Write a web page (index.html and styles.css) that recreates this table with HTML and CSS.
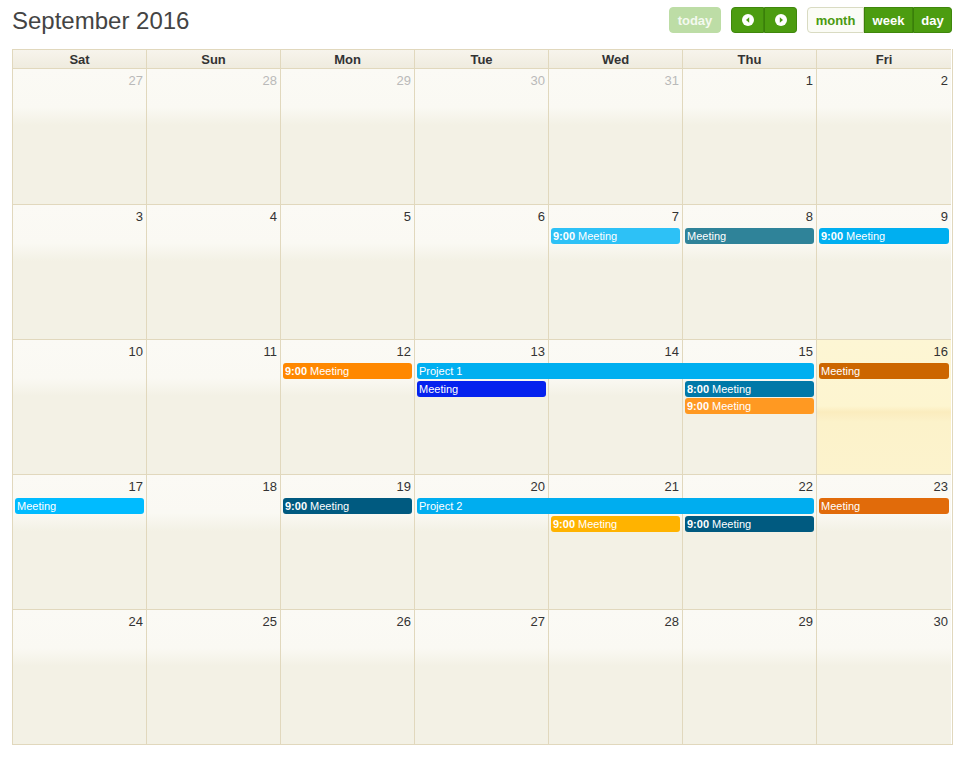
FILE: index.html
```html
<!DOCTYPE html>
<html>
<head>
<meta charset="utf-8">
<link rel="stylesheet" href="styles.css">
</head>
<body>
<div class="cal">
  <div class="toolbar">
    <h2 class="title">September 2016</h2>
    <div class="tools">
      <button class="btn today">today</button>
      <div class="group">
        <button class="btn nav"><svg width="12" height="12" viewBox="0 0 12 12"><circle cx="6" cy="6" r="6" fill="#fff"/><path d="M7.2 3.3 L4 6 L7.2 8.7 Z" fill="#4a9b0f"/></svg></button>
        <button class="btn nav"><svg width="12" height="12" viewBox="0 0 12 12"><circle cx="6" cy="6" r="6" fill="#fff"/><path d="M4.8 3.3 L8 6 L4.8 8.7 Z" fill="#4a9b0f"/></svg></button>
      </div>
      <div class="group">
        <button class="btn view active">month</button>
        <button class="btn view">week</button>
        <button class="btn view">day</button>
      </div>
    </div>
  </div>

  <div class="grid">
    <div class="head">
      <div>Sat</div><div>Sun</div><div>Mon</div><div>Tue</div><div>Wed</div><div>Thu</div><div>Fri</div>
    </div>

    <div class="week first">
      <div class="day c1 other">27</div>
      <div class="day c2 other">28</div>
      <div class="day c3 other">29</div>
      <div class="day c4 other">30</div>
      <div class="day c5 other">31</div>
      <div class="day c6">1</div>
      <div class="day c7">2</div>
    </div>

    <div class="week">
      <div class="day c1">3</div>
      <div class="day c2">4</div>
      <div class="day c3">5</div>
      <div class="day c4">6</div>
      <div class="day c5">7</div>
      <div class="day c6">8</div>
      <div class="day c7">9</div>
      <div class="ev c5 r1 e-sky"><b>9:00</b> Meeting</div>
      <div class="ev c6 r1 e-teal">Meeting</div>
      <div class="ev c7 r1 e-blue"><b>9:00</b> Meeting</div>
    </div>

    <div class="week">
      <div class="day c1">10</div>
      <div class="day c2">11</div>
      <div class="day c3">12</div>
      <div class="day c4">13</div>
      <div class="day c5">14</div>
      <div class="day c6">15</div>
      <div class="day c7 today-cell">16</div>
      <div class="ev c3 r1 e-orange"><b>9:00</b> Meeting</div>
      <div class="ev c4 s3 r1 e-blue">Project 1</div>
      <div class="ev c7 r1 e-brown">Meeting</div>
      <div class="ev c4 r2 e-royal">Meeting</div>
      <div class="ev c6 r2 e-ocean"><b>8:00</b> Meeting</div>
      <div class="ev c6 r3 e-amber"><b>9:00</b> Meeting</div>
    </div>

    <div class="week">
      <div class="day c1">17</div>
      <div class="day c2">18</div>
      <div class="day c3">19</div>
      <div class="day c4">20</div>
      <div class="day c5">21</div>
      <div class="day c6">22</div>
      <div class="day c7">23</div>
      <div class="ev c1 r1 e-cyan">Meeting</div>
      <div class="ev c3 r1 e-navy"><b>9:00</b> Meeting</div>
      <div class="ev c4 s3 r1 e-blue2">Project 2</div>
      <div class="ev c7 r1 e-rust">Meeting</div>
      <div class="ev c5 r2 e-gold"><b>9:00</b> Meeting</div>
      <div class="ev c6 r2 e-navy"><b>9:00</b> Meeting</div>
    </div>

    <div class="week last">
      <div class="day c1">24</div>
      <div class="day c2">25</div>
      <div class="day c3">26</div>
      <div class="day c4">27</div>
      <div class="day c5">28</div>
      <div class="day c6">29</div>
      <div class="day c7">30</div>
    </div>
  </div>
</div>
</body>
</html>
```

FILE: styles.css
```css
* { box-sizing: border-box; }
body {
  margin: 0;
  background: #fff;
  font-family: "Liberation Sans", Arial, sans-serif;
  color: #333;
}
.cal {
  width: 941px;
  margin-left: 12px;
}
.toolbar {
  display: flex;
  justify-content: space-between;
  align-items: flex-start;
  padding-top: 7px;
  height: 49px;
}
.title {
  margin: 0;
  font-size: 24px;
  font-weight: normal;
  line-height: 27px;
  color: #444;
}
.tools {
  display: flex;
  gap: 10px;
  padding-right: 1px;
}
.group { display: flex; }
.btn {
  height: 26px;
  border: 1px solid #3f870c;
  background: #4c9c10;
  color: #fff;
  font-family: "Liberation Sans", Arial, sans-serif;
  font-weight: bold;
  font-size: 13px;
  padding: 0;
  margin: 0;
  border-radius: 4px;
  display: flex;
  align-items: center;
  justify-content: center;
}
.btn.today {
  width: 52px;
  background: #bddda6;
  border-color: #bddda6;
  color: #f4f9ef;
}
.group .btn { border-radius: 0; }
.group .btn:first-child { border-radius: 4px 0 0 4px; }
.group .btn:last-child { border-radius: 0 4px 4px 0; }
.group .btn + .btn { border-left-color: #3a7f09; }
.btn.nav { width: 33px; }
.btn.view:nth-child(1) { width: 57px; }
.btn.view:nth-child(2) { width: 49px; }
.btn.view:nth-child(3) { width: 39px; }
.btn.view.active {
  background: #fbfcf6;
  color: #4a9a10;
  border-color: #d9dbc2;
}

.grid {
  border-right: 1px solid #e1d8bd;
  border-bottom: 1px solid #e1d8bd;
}
.head {
  display: grid;
  grid-template-columns: repeat(6, 134px) 135px;
  height: 19px;
}
.head div {
  border-top: 1px solid #e1d8bd;
  border-left: 1px solid #e1d8bd;
  background: linear-gradient(#f7f4ec, #efebde);
  font-size: 13px;
  font-weight: bold;
  color: #333;
  text-align: center;
  line-height: 19px;
}
.week {
  display: grid;
  grid-template-columns: repeat(6, 134px) 135px;
  grid-template-rows: 24px 18px 17px 1fr;
  height: 135px;
}
.week.first { height: 136px; }
.day {
  grid-row: 1 / -1;
  border-top: 1px solid #e1d8bd;
  border-left: 1px solid #e1d8bd;
  background: linear-gradient(#fbfaf5 0, #faf9f3 38px, #f3f1e5 56px, #f3f1e5 100%);
  font-size: 13px;
  line-height: 15px;
  text-align: right;
  padding: 4px 3px 0 0;
  color: #333;
}
.day.other { color: #b9b9b9; }
.day.today-cell {
  background: linear-gradient(#fdf6d4 0, #fdf5d0 66px, #fbecbe 72px, #fcf2ca 82px, #fcf3cd 100%);
}
.c1 { grid-column: 1; }
.c2 { grid-column: 2; }
.c3 { grid-column: 3; }
.c4 { grid-column: 4; }
.c5 { grid-column: 5; }
.c6 { grid-column: 6; }
.c7 { grid-column: 7; }
.c4.s3 { grid-column: 4 / span 3; }
.r1 { grid-row: 2; }
.r2 { grid-row: 3; }
.r3 { grid-row: 4; align-self: start; }
.ev {
  height: 16px;
  margin: 0 2px 0 3px;
  border-radius: 3px;
  color: #fff;
  font-size: 11px;
  line-height: 16px;
  padding-left: 2px;
  white-space: nowrap;
  overflow: hidden;
}
.ev b { font-weight: bold; }
.e-sky { background: #2dc1f6; }
.e-teal { background: #2f8399; }
.e-blue { background: #00aff0; }
.e-blue2 { background: #00adef; }
.e-orange { background: #ff8800; }
.e-brown { background: #cc6600; }
.e-royal { background: #0522ee; }
.e-ocean { background: #0078a8; }
.e-amber { background: #ff9922; }
.e-cyan { background: #00bbff; }
.e-navy { background: #005a80; }
.e-rust { background: #e16b0a; }
.e-gold { background: #ffb300; }
```
